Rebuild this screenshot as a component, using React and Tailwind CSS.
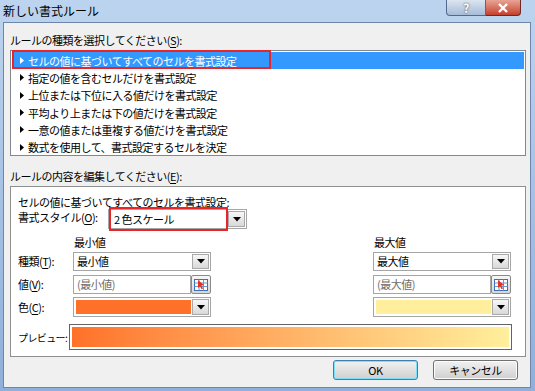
import React from 'react'

const FONT = { fontFamily: '"Noto Sans CJK JP", "Liberation Sans", sans-serif' }

const RULES = [
  'セルの値に基づいてすべてのセルを書式設定',
  '指定の値を含むセルだけを書式設定',
  '上位または下位に入る値だけを書式設定',
  '平均より上または下の値だけを書式設定',
  '一意の値または重複する値だけを書式設定',
  '数式を使用して、書式設定するセルを決定',
]

function DropBtn({ className = '' }) {
  return (
    <div className={`w-[17px] shrink-0 flex items-center justify-center border border-[#a9a9a9] bg-gradient-to-b from-[#f7f7f7] to-[#d9d9d9] ${className}`}>
      <svg width="8" height="5" viewBox="0 0 8 5"><path d="M0 0h8L4 4.5z" fill="#000" /></svg>
    </div>
  )
}

function Combo({ text, w = 'w-[138px]', h = 'h-[19px]' }) {
  return (
    <div className={`${w} ${h} flex bg-white border border-[#a5a5a5] p-[1px]`}>
      <div className="flex-1 pl-[2px] leading-[15px] text-black">{text}</div>
      <DropBtn />
    </div>
  )
}

function RefBtn() {
  return (
    <div className="w-[20px] h-[19px] shrink-0 flex items-center justify-center border border-[#8a8a8a] rounded-[2px] bg-gradient-to-b from-[#f6f6f6] to-[#d6d6d6]">
      <svg width="14" height="12" viewBox="0 0 14 12">
        <rect x="0.5" y="0.5" width="13" height="11" fill="#fff" stroke="#3a6fb5" />
        <path d="M0.5 4h13M0.5 7.5h13M5 0.5v11M9.5 0.5v11" stroke="#6b96d0" />
        <path d="M4 1l6 5-2.5 0.5 1.5 3-1.5 0.8-1.5-3L4 9z" fill="#e03424" />
      </svg>
    </div>
  )
}

function ValInput({ text }) {
  return (
    <div className="flex h-[19px]">
      <div className="w-[118px] h-full bg-white border border-[#a5a5a5] pl-[3px] leading-[17px] text-[#6d6d6d]">{text}</div>
      <RefBtn />
    </div>
  )
}

function ColorPick({ color }) {
  return (
    <div className="w-[138px] h-[20px] flex bg-white border border-[#a5a5a5] p-[1px]">
      <div className="flex-1 my-[1px] ml-[1px] mr-[1px]" style={{ background: color }} />
      <DropBtn />
    </div>
  )
}

function U({ children }) {
  return <span className="underline underline-offset-2">{children}</span>
}

export default function App() {
  return (
    <div className="w-[535px] h-[391px] overflow-hidden flex flex-col bg-gradient-to-b from-[#bcd4ef] to-[#8fb0da] text-[11px] tracking-[-0.5px] text-black" style={FONT}>
      <div className="h-[22px] shrink-0 flex items-start relative">
        <div className="pl-[3px] pt-[3px] text-[12px] tracking-normal leading-[15px] text-black">新しい書式ルール</div>
        <div className="ml-auto mr-[14px] flex h-[16px]">
          <div className="w-[40px] h-full flex items-center justify-center border border-[#536a8c] border-t-0 rounded-bl-[4px] bg-gradient-to-b from-[#dbe5f1] to-[#a6bcd8] text-white font-bold text-[12px] leading-none" style={{ textShadow: '0 0 2px #333' }}>?</div>
          <div className="w-[35px] h-full flex items-center justify-center border border-[#6e2a22] border-l-0 border-t-0 rounded-br-[4px] bg-gradient-to-b from-[#e8a395] to-[#c43c2b]">
            <svg width="12" height="10" viewBox="0 0 12 10"><path d="M2 1l8 8M10 1L2 9" stroke="#fff" strokeWidth="2.4" /></svg>
          </div>
        </div>
      </div>

      <div className="flex-1 ml-[3px] mr-[4px] mb-[3px] border border-[#6f86a8] bg-[#f0f0f0] pl-[6px] pr-[4px] flex flex-col">
        <div className="pt-[10px] h-[24px] leading-[14px]">ルールの種類を選択してください(<U>S</U>):</div>
        <div className="mt-[3px] h-[106px] border border-[#828790] bg-white p-[1px] relative">
          {RULES.map((r, i) => (
            <div key={r} className={`h-[17.3px] flex items-center pl-[8px] ${i === 0 ? 'bg-[#3399ff] text-white' : ''}`}>
              <svg width="4" height="7" viewBox="0 0 4 7" className="mr-[4px]"><path d="M0 0l4 3.5L0 7z" fill={i === 0 ? '#fff' : '#000'} /></svg>
              <span className="leading-[14px]">{r}</span>
            </div>
          ))}
          <div className="absolute left-[1px] top-[-1px] w-[259px] h-[19px] border-2 border-[#e8262a]" />
        </div>
        <div className="mt-[13px] h-[14px] leading-[14px]">ルールの内容を編集してください(<U>E</U>):</div>
        <div className="mt-[3px] h-[171px] border border-[#8e8f8f] bg-white pl-[7px] pt-[8px] flex flex-col">
          <div className="h-[14px] leading-[14px]">セルの値に基づいてすべてのセルを書式設定:</div>
          <div className="flex h-[20px]">
            <div className="w-[90px] leading-[16px]">書式スタイル(<U>O</U>):</div>
            <div className="relative">
              <div className="w-[139px] h-[20px] flex bg-white border border-[#a5a5a5] p-[1px]">
                <div className="flex-1 pl-[4px] leading-[16px] whitespace-pre">2 色スケール</div>
                <DropBtn />
              </div>
              <div className="absolute left-[1px] top-[-2px] w-[119px] h-[24px] border-2 border-[#e8262a]" />
            </div>
          </div>
          <div className="mt-[6px] h-[14px] flex leading-[14px]">
            <div className="w-[56px]" />
            <div className="w-[300px]">最小値</div>
            <div>最大値</div>
          </div>
          <div className="mt-[3px] flex h-[19px] items-center">
            <div className="w-[55px]">種類(<U>T</U>):</div>
            <Combo text="最小値" />
            <div className="w-[162px]" />
            <Combo text="最大値" />
          </div>
          <div className="mt-[4px] flex h-[19px] items-center">
            <div className="w-[55px]">値(<U>V</U>):</div>
            <ValInput text="(最小値)" />
            <div className="w-[162px]" />
            <ValInput text="(最大値)" />
          </div>
          <div className="mt-[3px] flex h-[20px] items-center">
            <div className="w-[55px]">色(<U>C</U>):</div>
            <ColorPick color="#ff7128" />
            <div className="w-[162px]" />
            <ColorPick color="#ffef9c" />
          </div>
          <div className="mt-[7px] flex h-[26px] items-center">
            <div className="w-[51px] shrink-0 whitespace-nowrap text-[10px] tracking-[-0.6px]">プレビュー:</div>
            <div className="w-[443px] h-[26px] border border-[#646464] bg-white p-[2px]">
              <div className="w-full h-full bg-gradient-to-r from-[#ff7128] to-[#ffef9c]" />
            </div>
          </div>
        </div>
        <div className="mt-[3px] flex justify-end gap-[15px] pr-[8px]">
          <div className="w-[85px] h-[20px] flex items-center justify-center rounded-[3px] border border-[#3c7fb1] bg-gradient-to-b from-[#f2f2f2] to-[#cfcfcf] shadow-[inset_0_0_0_1px_#7de0fb]">OK</div>
          <div className="w-[85px] h-[20px] flex items-center justify-center rounded-[3px] border border-[#707070] bg-gradient-to-b from-[#f2f2f2] to-[#cfcfcf] shadow-[inset_0_0_0_1px_#fcfcfc]">キャンセル</div>
        </div>
      </div>
    </div>
  )
}
